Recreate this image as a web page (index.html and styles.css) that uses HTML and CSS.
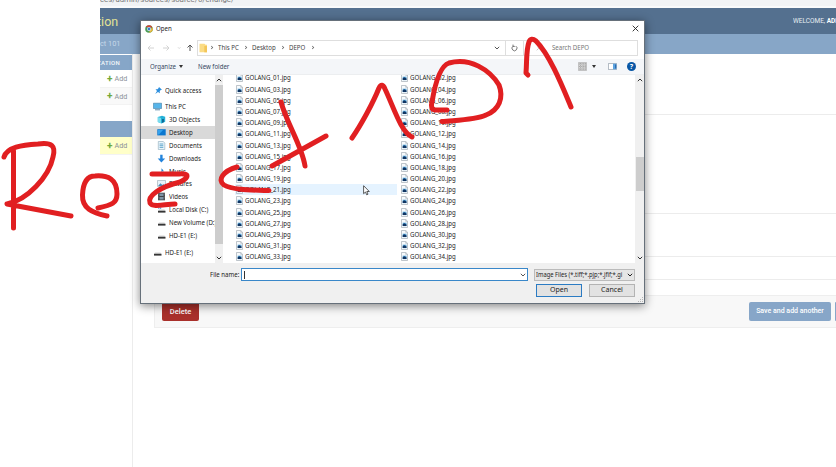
FILE: index.html
```html
<!DOCTYPE html>
<html lang="en">
<head>
<meta charset="utf-8">
<title>Open</title>
<link rel="stylesheet" href="styles.css">
</head>
<body>
<svg class="defs" width="0" height="0">
  <symbol id="file" viewBox="0 0 7 9"><path d="M.5.5h4.3L6.5 2.2v6.3h-6z" fill="#f7fafc" stroke="#a3adb5" stroke-width=".7"/><path d="M4.7.5v1.8h1.8" fill="none" stroke="#a3adb5" stroke-width=".6"/><path d="M1.7 3.7h3.8v3.4H1.700z" fill="#55a3d8"/><path d="M1.7 7.1V5.200l1.500-1 2.300 1.300v1.600z" fill="#103461"/></symbol>
  <symbol id="drive" viewBox="0 0 9 9"><path d="M2 4.4h5.4l1 1.6H1z" fill="#d5d5d5"/><path d="M1 5.8h7.5v1.8H1z" fill="#353535"/></symbol>
  <symbol id="chev" viewBox="0 0 6 4"><path d="M.8.8 3 3 5.2.8" fill="none" stroke="currentColor"/></symbol>
</svg>
<div class="screen">
  <div class="site">
    <div class="url"><span>ces/admin/sources/source/6/change/</span></div>
    <header class="brand"><span class="brand-name">tion</span><span class="welcome">WELCOME, <b>ADMIN</b></span></header>
    <div class="crumbs"><span>ect 101</span></div>
    <div class="main">
      <aside class="apps">
        <div class="caption"><span>ZATION</span></div>
        <div class="app"><b>+</b>Add</div>
        <div class="app alt"><b>+</b>Add</div>
        <div class="caption second"></div>
        <div class="app current"><b>+</b>Add</div>
      </aside>
      <section class="form">
        <div class="field f1"></div><div class="field f2"></div><div class="field f3"></div><div class="field f4"></div>
        <div class="submit"><span class="delete">Delete</span><span class="save">Save and add another</span><span class="save next"></span></div>
      </section>
    </div>
  </div>

  <div class="dialog">
    <div class="title">
      <svg width="8" height="8" viewBox="0 0 8 8"><circle cx="4" cy="4" r="3.8" fill="#4a9b58"/><path d="M.7 2A3.8 3.8 0 0 1 7.4 2.4H4z" fill="#d64135"/><path d="M7.5 2.4A3.8 3.8 0 0 1 4 7.8l1.8-4z" fill="#e9b83a"/><circle cx="4" cy="4" r="1.9" fill="#fff"/><circle cx="4" cy="4" r="1.4" fill="#397bd1"/></svg>
      <span class="t">Open</span>
      <svg class="close" width="7" height="7" viewBox="0 0 7 7"><path d="m.7.7 5.6 5.6m0-5.6L.7 6.3" stroke="#222" stroke-width=".9"/></svg>
    </div>
    <div class="nav">
      <svg class="arrows" width="47" height="10" viewBox="0 0 47 10" fill="none"><path d="M7 5H1m2.500-2.500L1 5l2.500 2.500M16 5h6m-2.500-2.500L22 5l-2.500 2.500" stroke="#d2d2d2"/><path d="m31 4.300 1.200 1.200 1.200-1.200" stroke="#ccc" stroke-width=".8"/><path d="M43 8V2m-2.500 2.500L43 2l2.500 2.500" stroke="#555"/></svg>
      <div class="path">
        <svg width="8" height="10" viewBox="0 0 8 10"><path d="M.5.700h5l1 1H8v7.600H.5z" fill="#fbdc85"/><path d="M5.300 3H8v6.300H5.300z" fill="#f3c65a"/></svg>
        <i class="sep"></i><span class="t p1">This PC</span><i class="sep"></i><span class="t p2">Desktop</span><i class="sep"></i><span class="t p3">DEPO</span><i class="sep"></i>
        <svg class="drop" width="6" height="4"><use href="#chev"/></svg>
        <div class="reload"><svg width="7" height="8" viewBox="0 0 7 8"><path d="M4.800 2.100A2.500 2.500 0 1 1 2 2.200M2 .6v1.800h1.800" fill="none" stroke="#555" stroke-width=".8"/></svg></div>
      </div>
      <div class="search"><svg width="7" height="7" viewBox="0 0 7 7"><circle cx="4" cy="3" r="2" fill="none" stroke="#bbb" stroke-width=".7"/><path d="M2.500 4.500.7 6.300" stroke="#bbb" stroke-width=".8"/></svg><span class="t">Search DEPO</span></div>
    </div>
    <div class="tools">
      <span class="t organize">Organize</span><i class="tri"></i><span class="t newf">New folder</span>
      <svg class="view" width="9" height="9" viewBox="0 0 9 9"><path d="M.5.5h8v8h-8z" fill="#d6d6d6" stroke="#aaa" stroke-width=".6"/><path d="M1 2h7M1 4.500h7M1 7h7M2.500 1v7M5 1v7M7.300 1v7" stroke="#959595" stroke-width=".7" stroke-dasharray="1.2 .9"/></svg>
      <i class="tri t2"></i>
      <svg class="pane" width="9" height="7" viewBox="0 0 9 7"><path d="M.4.4h8.200v6.200H.4z" fill="#fff" stroke="#8997a5" stroke-width=".7"/><path d="M5 .7h3.300v5.600H5z" fill="#5ca2df"/><path d="M7 1.500h1.300v4H7z" fill="#2a6cb0"/></svg>
      <span class="help">?</span>
    </div>
    <div class="body">
      <div class="tree">
        <div class="node quick"><svg width="9" height="9" viewBox="0 0 9 9"><path d="m5 1 3 2.800-1.300.300-1 1.200.200 2L4 6 1.200 8 3 5 1.500 3.200l2 .100L4.600 2z" fill="#2d8fde"/></svg><span class="t">Quick access</span></div>
        <div class="node pc"><svg width="9" height="9" viewBox="0 0 9 9"><path d="M.4 1.200h8.200v5.300H.4z" fill="#57b5ea" stroke="#437da5" stroke-width=".6"/><path d="M2 7.800h5" stroke="#5d8baa"/></svg><span class="t">This PC</span></div>
        <div class="node sub"><svg width="9" height="9" viewBox="0 0 9 9"><path d="M.8 2 5 .7l3.200 1v5L4.500 8.500.8 7z" fill="#24b0d7"/><path d="m.8 2 3.200 1v5.200L.8 7z" fill="#79dcee"/><path d="M5 4h2v3L5 8z" fill="#126a96"/></svg><span class="t">3D Objects</span></div>
        <div class="node sub sel"><svg width="9" height="9" viewBox="0 0 9 9"><path d="M.3 1.200h8.400v6.200H.3z" fill="#0b78d0"/><path d="M1 2h5L2 6.500H1z" fill="#35a2ed"/></svg><span class="t">Desktop</span></div>
        <div class="node sub"><svg width="9" height="9" viewBox="0 0 9 9"><path d="M1.300.5h5l1.500 1.600v6.400H1.300z" fill="#eaf5fb" stroke="#8ba9ba" stroke-width=".6"/><path d="M2.600 3h3.700M2.600 4.700h3.700M2.600 6.400h3.700" stroke="#4295c3" stroke-width=".8"/></svg><span class="t">Documents</span></div>
        <div class="node sub"><svg width="9" height="9" viewBox="0 0 9 9"><path d="M3.200.7h2.400v3.800h2.600L4.400 8.500.7 4.500h2.500z" fill="#2384dc"/></svg><span class="t">Downloads</span></div>
        <div class="node sub"><svg width="9" height="9" viewBox="0 0 9 9"><path d="M4.500.5c0 2 2.500 2 2 4.500L5.400 3.500V7c0 2-3.200 2-3.200.300 0-1 1.200-1.500 2.300-1.200z" fill="#197bc9"/></svg><span class="t">Music</span></div>
        <div class="node sub"><svg width="9" height="9" viewBox="0 0 9 9"><path d="M.5 1.500h8v6h-8z" fill="#e7f3fa" stroke="#98a8b4" stroke-width=".6"/><path d="m1 7 2.500-2.800L5.300 6l1-1L8 7z" fill="#4d8bb6"/></svg><span class="t">Pictures</span></div>
        <div class="node sub"><svg width="9" height="9" viewBox="0 0 9 9"><path d="M1 .7h7v7.600H1z" fill="#3f4348"/><path d="M2.500 1.400h4v2.700h-4zm0 3.500h4v2.700h-4z" fill="#7d94a8"/><path d="M1.700 1v7M7.300 1v7" stroke="#bbb" stroke-width=".5" stroke-dasharray=".7"/></svg><span class="t">Videos</span></div>
        <div class="node sub"><svg width="9" height="9"><use href="#drive"/><path d="M1.200 2.500h1.200v1.300H1.200zm1.800 0h1.200v1.300H3z" fill="#3697df"/></svg><span class="t">Local Disk (C:)</span></div>
        <div class="node sub"><svg width="9" height="9"><use href="#drive"/></svg><span class="t">New Volume (D:)</span></div>
        <div class="node sub"><svg width="9" height="9"><use href="#drive"/></svg><span class="t">HD-E1 (E:)</span></div>
        <div class="node last"><svg width="9" height="9"><use href="#drive"/></svg><span class="t">HD-E1 (E:)</span></div>
      </div>
      <div class="scroll left"><svg class="up" width="6" height="4"><use href="#chev"/></svg><div class="thumb"></div><svg width="6" height="4"><use href="#chev"/></svg></div>
      <div class="files" id="files"></div>
      <div class="scroll right"><svg class="up" width="6" height="4"><use href="#chev"/></svg><div class="track"><div class="thumb"></div></div><svg width="6" height="4"><use href="#chev"/></svg></div>
    </div>
    <div class="foot">
      <div class="row"><label class="t">File name:</label><div class="name"><i class="caret"></i><svg width="6" height="4"><use href="#chev"/></svg></div><div class="type"><span class="t">Image Files (*.tiff;*.pjp;*.jfif;*.gi</span><svg width="6" height="4"><use href="#chev"/></svg></div></div>
      <div class="buttons"><span class="btn primary">Open</span><span class="btn">Cancel</span></div>
      <svg class="grip" width="5" height="5" viewBox="0 0 5 5"><path d="M4 0h1v1H4zM2 2h1v1H2zm2 0h1v1H4zM0 4h1v1H0zm2 0h1v1H2zm2 0h1v1H4z" fill="#b5b5b5"/></svg>
    </div>
  </div>

  <svg class="cursor" width="7" height="11" viewBox="0 0 7 11"><path d="M.6.7v8l1.900-1.700 1.200 2.800 1.300-.6-1.200-2.700h2.500z" fill="#fff" stroke="#333" stroke-width=".8"/></svg>
  <svg class="ink" width="836" height="467" viewBox="0 0 836 467">
    <path d="M13.500 151V228M4 157C7 147 22 145 38 144C52 142 56 146 53 157C49 177 27 200 7 204L71 216"/>
    <path d="M98 208C112 205 117 203 117 194C117 179 108 175 95 176C86 176 83 184 82.500 195C82 208 92 213 107 216"/>
    <path d="M152 174H179C190 173 189 178 180 182C160 187 147 196 150 203C153 208 165 204 175 204"/>
    <path d="M237 167C223 171 217 180 224 185C232 190 250 190 269 190.500"/>
    <path d="M281 102C287 124 302 146 305 166M272 166L326 136"/>
    <path d="M352 138C361 125 373 103 379 88Q382 82 385 89C394 108 401 132 412 137"/>
    <path d="M447 110L435 110Q430 109 432 102C435 84 440 66 449 63C470 57 490 70 499 85C504 98 499 110 486 115C475 120 458 120 442 121.500"/>
    <path d="M528 75L526 73C527 60 526 50 529 42Q531 37 536 41C550 55 563 88 571 107"/>
  </svg>
</div>
<script src="files.js"></script>
</body>
</html>
```
FILE: files.js
```js
const list = document.getElementById('files');
for (let n = 1; n <= 34; n++) {
  const row = document.createElement('div');
  row.className = n === 21 ? 'file hover' : 'file';
  row.innerHTML = '<svg width="7" height="9"><use href="#file"/></svg><span class="t">GOLANG_' + String(n).padStart(2, '0') + '.jpg</span>';
  list.appendChild(row);
}
```
FILE: styles.css
```css
* { box-sizing: border-box; }
body { margin: 0; background: #fff; font-family: "Noto Sans", "Open Sans", sans-serif; font-size: 7px; color: #222; overflow: hidden; }
.defs { position: absolute; }
svg { display: block; flex: none; }
/* Condensed interface lettering */
.t { transform: scaleX(.87); transform-origin: left center; flex: none; }
.screen { position: relative; width: 836px; height: 467px; overflow: hidden; }
.site { margin-left: 100px; width: 736px; height: 467px; display: flex; flex-direction: column; font-family: Roboto, sans-serif; white-space: nowrap; }
.url { height: 8px; background: #f1f3f5; border-bottom: 2px solid #f9fafb; overflow: hidden; font-size: 7.8px; line-height: 8px; color: #777; }
.url span { display: block; margin-top: -4px; }
.brand { height: 26px; background: #54708f; display: flex; align-items: center; justify-content: space-between; overflow: hidden; }
.brand-name { color: #e2e295; font-size: 12.5px; margin-left: -3px; }
.welcome { color: #e6edf3; font-size: 6.5px; width: 43px; overflow: hidden; }
.welcome b { color: #fff; }
.crumbs { height: 20px; background: #87a6c7; color: #c6d8e9; font-size: 7.4px; line-height: 20px; overflow: hidden; }
.crumbs span { margin-left: -4px; }
.main { flex: 1; display: flex; }
.apps { width: 33px; padding-top: 1px; border-right: 1px solid #ececec; }
.caption { height: 15px; width: 32px; background: #86a6c8; color: #f4f8fb; font-size: 6px; font-weight: 500; line-height: 15px; overflow: hidden; }
.caption span { margin-left: -3px; letter-spacing: .35px; }
.caption.second { margin-top: 16px; height: 16px; }
.app { width: 32px; height: 18px; display: flex; align-items: center; padding-left: 7px; gap: 2px; color: #8c9298; font-size: 7.2px; border-bottom: 1px solid #f3f3f3; }
.app b { color: #70a83b; font-size: 10px; line-height: 8px; }
.app.alt { background: #f9f9f9; height: 17px; }
.app.current { background: #ffffc9; height: 18px; }
.form { flex: 1; padding-left: 21px; }
.field { border-bottom: 1px solid #ececec; }
.f1 { height: 61px; } .f2 { height: 99px; } .f3 { height: 43px; } .f4 { height: 23px; }
.submit { margin-top: 15px; height: 33px; border: 1px solid #eee; border-right: 0; background: #f8f8f8; display: flex; align-items: center; padding-left: 7px; overflow: hidden; }
.delete { width: 37px; height: 19px; border-radius: 2px; background: #a9302b; color: #fff; font-size: 7.5px; font-weight: 500; line-height: 19px; text-align: center; }
.save { margin-left: auto; width: 82px; height: 19px; border-radius: 2px; background: #87a6c8; color: #fff; font-size: 7px; font-weight: 500; line-height: 19px; text-align: center; }
.save.next { margin-left: 4px; width: 1px; border-radius: 1px 0 0 1px; flex: none; }

.dialog { position: absolute; left: 140px; top: 20px; width: 505px; height: 284px; border: 1px solid #66707a; background: #fff; box-shadow: 0 2px 9px rgba(0,0,0,.48); display: flex; flex-direction: column; white-space: nowrap; }
.title { height: 15px; display: flex; align-items: center; padding: 0 5px 0 4px; gap: 3px; }
.close { margin-left: auto; }
.nav { height: 23px; display: flex; align-items: center; padding: 0 6px; color: #444; }
.arrows { margin-right: 3px; }
.path { width: 327px; height: 16px; border: 1px solid #dedede; display: flex; align-items: center; padding-left: 1px; }
.sep { width: 3px; height: 3px; border: solid #666; border-width: 1px 1px 0 0; transform: rotate(45deg) scale(.8); margin: 0 5px 0 3px; flex: none; }
.p1 { width: 23px; } .p2 { width: 26px; } .p3 { width: 18.500px; }
.drop { margin-left: auto; color: #555; }
.reload { margin-left: 5px; width: 18px; height: 14px; border-left: 1px solid #dedede; display: flex; align-items: center; justify-content: center; }
.search { margin-left: -1px; flex: 1; height: 16px; border: 1px solid #dedede; display: flex; align-items: center; padding-left: 12px; gap: 9px; color: #777; }
.tools { height: 16px; background: #f4f6f9; border-bottom: 1px solid #eceef0; display: flex; align-items: center; padding: 0 8px 0 9px; color: #33465e; }
.organize { width: 26px; }
.tri { border: solid transparent; border-width: 3px 2.5px 0; border-top-color: #333; margin-left: 3px; }
.newf { margin-left: 15px; }
.view { margin-left: auto; }
.tri.t2 { margin: 0 12px 0 5px; }
.help { width: 9px; height: 9px; border-radius: 50%; background: #0756a5; color: #fff; font-weight: 700; line-height: 9px; text-align: center; margin-left: 10px; }
.body { height: 188px; display: flex; overflow: hidden; }
.tree { width: 74px; overflow: hidden; padding-top: 8.6px; flex: none; }
.node { height: 12.85px; display: flex; align-items: center; gap: 3px; padding-left: 12px; }
.node.quick { padding-left: 13px; margin-bottom: 4px; gap: 2px; }
.node.sub { padding-left: 16px; }
.node.sel { background: #d9d9d9; }
.node.last { margin-top: 4px; }
.scroll { width: 9px; background: #f0f0f0; display: flex; flex-direction: column; align-items: center; justify-content: space-between; padding: 3px 0; color: #333; flex: none; }
.up { transform: rotate(180deg); }
.scroll.left .thumb { width: 8px; height: 159px; background: #cdcdcd; margin-bottom: 10px; }
.scroll.left { width: 8px; }
.track { flex: 1; padding-top: 75px; }
.right .thumb { width: 8px; height: 34px; background: #cdcdcd; }
.files { flex: 1; display: grid; grid-template-columns: 162px 162px; column-gap: 3px; grid-auto-rows: 11.2px; margin-top: -2.7px; padding-left: 12px; }
.file { display: flex; align-items: center; gap: 2px; padding-left: 1px; }
.file.hover { background: #e5f3ff; }
.foot { flex: 1; background: #f0f0f0; position: relative; padding: 5px 9px 0 0; }
.row { display: flex; align-items: center; justify-content: flex-end; }
label { width: 31px; }
.name { width: 287px; height: 13px; border: 1px solid #3987c9; background: #fff; display: flex; align-items: center; justify-content: space-between; padding: 0 1px 0 2px; color: #555; }
.caret { width: 1px; height: 8px; background: #333; }
.type { margin-left: 6px; width: 101px; height: 12px; border: 1px solid #bbb; background: #e5e5e5; display: flex; align-items: center; padding: 0 1px; }
.type .t { width: 91px; transform: scaleX(.83); }
.buttons { margin-top: 3px; display: flex; justify-content: flex-end; gap: 7px; }
.btn { width: 46px; height: 13px; border: 1px solid #b3b3b3; background: #e2e2e2; line-height: 10px; text-align: center; }
.btn.primary { border: 1.5px solid #2b7bc3; }
.grip { position: absolute; right: 1px; bottom: 1px; }
.cursor { position: absolute; left: 363px; top: 185px; }
.ink { position: absolute; left: 0; top: 0; fill: none; stroke: #e11f21; stroke-width: 5; stroke-linecap: round; stroke-linejoin: round; }
```
